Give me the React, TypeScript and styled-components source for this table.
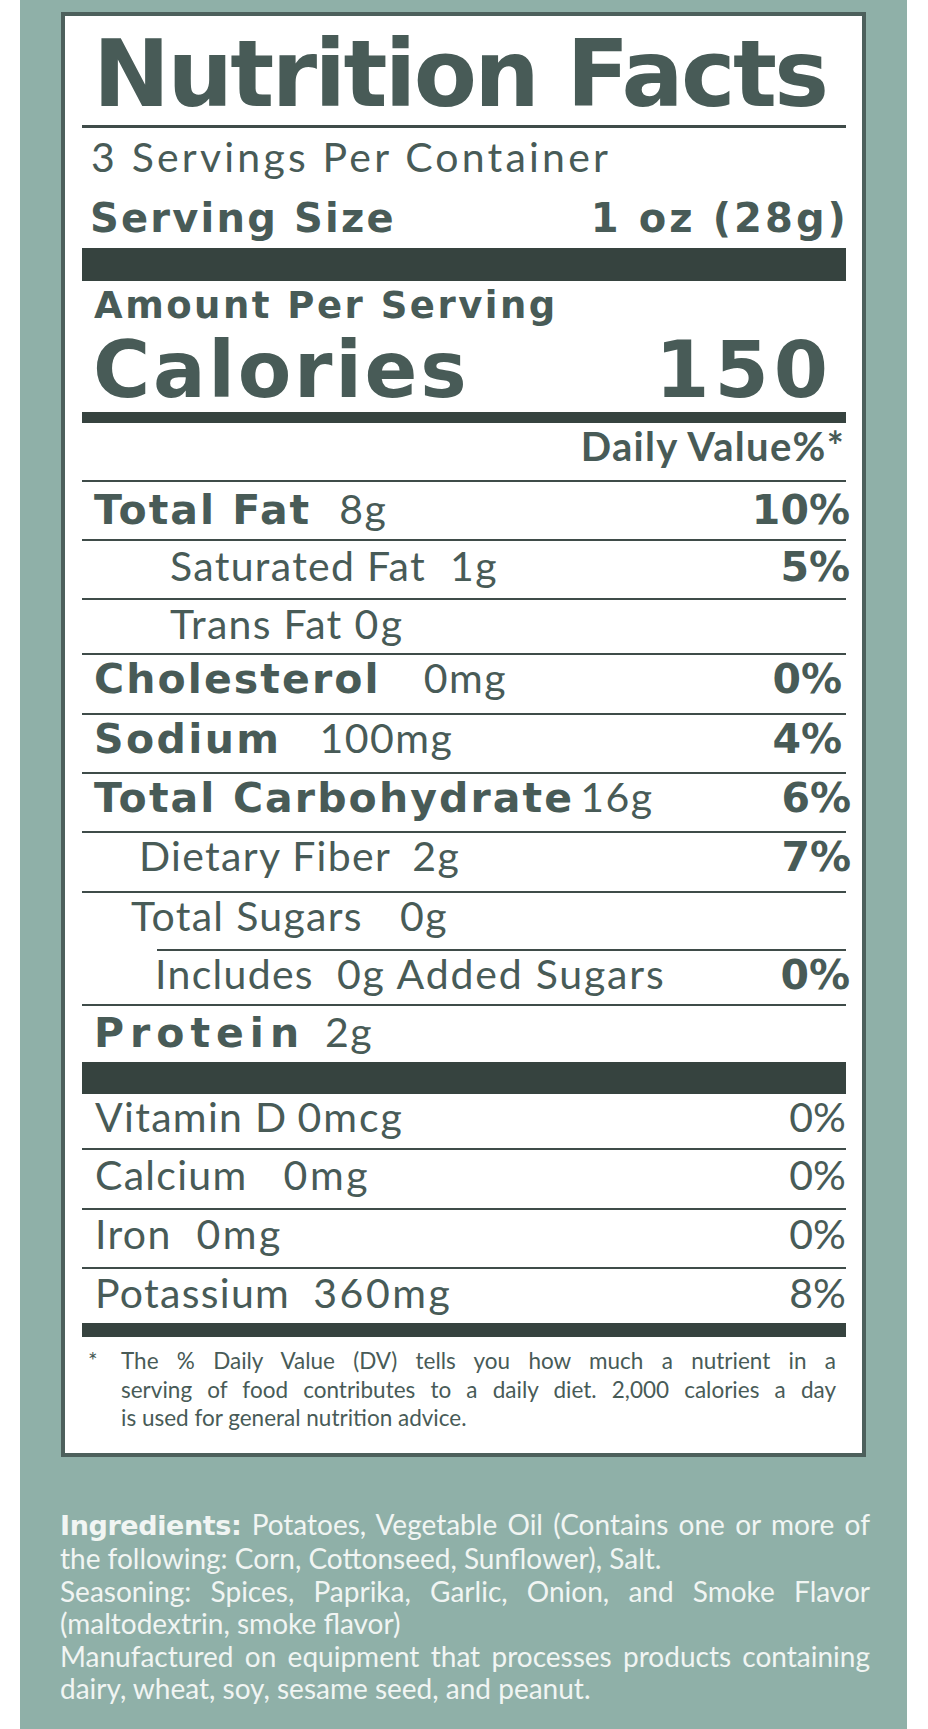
import React from "react";
import styled, { createGlobalStyle } from "styled-components";

const GlobalStyle = createGlobalStyle`
  html, body { margin: 0; padding: 0; background: #ffffff; }
  body { font-family: Lato, "Open Sans", sans-serif; }
  * { box-sizing: border-box; }
`;

const INK = "#485b57";
const BAR = "#36433f";
const RULE = "#3f4c49";
const HEAVY = `"DejaVu Sans", Verdana, sans-serif`;
const BOOK = `Lato, "Open Sans", sans-serif`;

const Page = styled.main`
  width: 887px;
  margin-left: 20px;
  background: #8fb0a8;
  padding: 12px 41px 26px;
`;

const Card = styled.section`
  background: #ffffff;
  border: 4px solid #4d605c;
  padding: 0 16px 20px 17px;
  color: ${INK};
  font-family: ${BOOK};
`;

const Title = styled.h1`
  margin: 0;
  font-family: ${HEAVY};
  font-size: 92px;
  line-height: 94px;
  font-weight: 700;
  letter-spacing: -2.6px;
  padding: 12px 0 3px 11px;
  border-bottom: 3px solid ${RULE};
  white-space: nowrap;
`;

const Servings = styled.div`
  font-size: 41px;
  line-height: 50px;
  font-weight: 400;
  letter-spacing: 3.2px;
  padding: 4px 0 0 9px;
`;

const SizeRow = styled.div`
  display: flex;
  justify-content: space-between;
  font-family: ${HEAVY};
  font-size: 40px;
  line-height: 50px;
  font-weight: 700;
  letter-spacing: 2.2px;
  margin-top: 11px;
  padding-left: 8px;
`;

const SizeValue = styled.span`
  letter-spacing: 3.1px;
  margin-right: -3px;
`;

const Bar = styled.div<{ $h: number; $mt?: number }>`
  height: ${(p) => p.$h}px;
  margin-top: ${(p) => p.$mt ?? 0}px;
  background: ${BAR};
`;

const Amount = styled.div`
  font-family: ${HEAVY};
  font-size: 37px;
  line-height: 40px;
  font-weight: 700;
  letter-spacing: 2.5px;
  margin-top: 5px;
  padding-left: 12px;
`;

const CaloriesRow = styled.div`
  display: flex;
  justify-content: space-between;
  font-family: ${HEAVY};
  font-size: 78px;
  line-height: 80px;
  font-weight: 700;
  padding: 4px 18px 0 11px;
`;

const CaloriesLabel = styled.span`
  letter-spacing: 2.7px;
`;

const CaloriesValue = styled.span`
  letter-spacing: 5px;
  margin-right: -5px;
`;

const DailyValue = styled.div`
  font-size: 40px;
  line-height: 47px;
  font-weight: 700;
  letter-spacing: 1.3px;
  text-align: right;
  padding: 0 1px 10px 0;
  border-bottom: 2px solid ${RULE};
`;

const Row = styled.div<{ $h: number; $pt?: number; $rule?: boolean }>`
  display: flex;
  align-items: baseline;
  height: ${(p) => p.$h}px;
  padding-top: ${(p) => p.$pt ?? 0}px;
  font-size: 41px;
  line-height: 46px;
  white-space: nowrap;
  border-bottom: ${(p) => (p.$rule === false ? "none" : `2px solid ${RULE}`)};
`;

const Rule = styled.div<{ $inset: number }>`
  height: 2px;
  margin-left: ${(p) => p.$inset}px;
  background: ${RULE};
`;

const Label = styled.span<{ $bold?: boolean; $indent: number; $ls?: number }>`
  font-family: ${(p) => (p.$bold ? HEAVY : BOOK)};
  font-weight: ${(p) => (p.$bold ? 700 : 400)};
  margin-left: ${(p) => p.$indent}px;
  letter-spacing: ${(p) => p.$ls ?? 1.3}px;
`;

const Amt = styled.span<{ $gap: number; $ls?: number }>`
  font-weight: 400;
  letter-spacing: ${(p) => p.$ls ?? 1.5}px;
  margin-left: ${(p) => p.$gap}px;
`;

const Pct = styled.span<{ $bold?: boolean; $mr?: number }>`
  margin-left: auto;
  font-family: ${(p) => (p.$bold ? HEAVY : BOOK)};
  font-weight: ${(p) => (p.$bold ? 700 : 400)};
  margin-right: ${(p) => p.$mr ?? 0}px;
`;

const Footnote = styled.div`
  display: flex;
  padding: 10px 10px 0 6px;
  font-size: 22.5px;
  line-height: 28.5px;
`;

const Star = styled.span`
  flex: 0 0 33px;
`;

const Lines = styled.div`
  flex: 1;
`;

const Line = styled.div<{ $full?: boolean }>`
  text-align: ${(p) => (p.$full ? "justify" : "left")};
  text-align-last: ${(p) => (p.$full ? "justify" : "left")};
  white-space: nowrap;
`;

const Ingredients = styled.div`
  margin: 51px -4px 0 -1px;
  color: #f1f5f3;
  font-family: ${BOOK};
  font-size: 28px;
  line-height: 32.5px;
`;

const Strong = styled.strong`
  font-family: ${HEAVY};
  font-weight: 700;
  font-size: 27px;
  letter-spacing: -0.4px;
`;

type Nutrient = {
  label: string;
  amount?: string;
  pct?: string;
  bold?: boolean;
  indent: number;
  gap: number;
  h: number;
  pt?: number;
  rule?: boolean;
  pctBold?: boolean;
  mr?: number;
  ls?: number;
  amtLs?: number;
};

const nutrients: Nutrient[] = [
  { label: "Total Fat", amount: "8g", pct: "10%", bold: true, ls: 2, indent: 12, gap: 28, h: 59, pt: 4, pctBold: true, mr: -4 },
  { label: "Saturated Fat", amount: "1g", pct: "5%", indent: 88, gap: 24, h: 59, pt: 2, pctBold: true, mr: -4 },
  { label: "Trans Fat", amount: "0g", amtLs: 2.5, indent: 88, gap: 12, h: 55, pt: 1 },
  { label: "Cholesterol", amount: "0mg", pct: "0%", bold: true, ls: 2.1, indent: 12, gap: 43, h: 60, pctBold: true, mr: 4 },
  { label: "Sodium", amount: "100mg", pct: "4%", bold: true, ls: 2.4, indent: 12, gap: 38, h: 59, pctBold: true, mr: 4 },
  { label: "Total Carbohydrate", amount: "16g", pct: "6%", bold: true, ls: 2.1, indent: 12, gap: 6, h: 59, pctBold: true, mr: -5 },
  { label: "Dietary Fiber", amount: "2g", pct: "7%", indent: 57, gap: 21, h: 60, pctBold: true, mr: -5 },
  { label: "Total Sugars", amount: "0g", indent: 49, gap: 37, h: 56, rule: false },
];

const nutrientsB: Nutrient[] = [
  { label: "Includes", amount: "0g Added Sugars", amtLs: 1.8, pct: "0%", indent: 73, gap: 23, h: 55, pctBold: true, mr: -4 },
  { label: "Protein", amount: "2g", bold: true, ls: 6, indent: 12, gap: 20, h: 56, pt: 3, rule: false },
];

const vitamins: Nutrient[] = [
  { label: "Vitamin D", amount: "0mcg", amtLs: 2, pct: "0%", indent: 13, gap: 10, h: 56 },
  { label: "Calcium", amount: "0mg", amtLs: 2.6, pct: "0%", indent: 13, gap: 36, h: 60, pt: 2 },
  { label: "Iron", amount: "0mg", amtLs: 2.4, pct: "0%", indent: 13, gap: 25, h: 59, pt: 1 },
  { label: "Potassium", amount: "360mg", amtLs: 2.6, pct: "8%", indent: 13, gap: 23, h: 54, pt: 1, rule: false },
];

function NutrientRow({ n }: { n: Nutrient }) {
  return (
    <Row $h={n.h} $pt={n.pt} $rule={n.rule}>
      <Label $bold={n.bold} $indent={n.indent} $ls={n.ls}>
        {n.label}
      </Label>
      {n.amount && (
        <Amt $gap={n.gap} $ls={n.amtLs}>
          {n.amount}
        </Amt>
      )}
      {n.pct && (
        <Pct $bold={n.pctBold} $mr={n.mr}>
          {n.pct}
        </Pct>
      )}
    </Row>
  );
}

export default function App() {
  return (
    <>
      <GlobalStyle />
      <Page>
        <Card>
          <Title>Nutrition Facts</Title>
          <Servings>3 Servings Per Container</Servings>
          <SizeRow>
            <span>Serving Size</span>
            <SizeValue>1 oz (28g)</SizeValue>
          </SizeRow>
          <Bar $h={33} $mt={5} />
          <Amount>Amount Per Serving</Amount>
          <CaloriesRow>
            <CaloriesLabel>Calories</CaloriesLabel>
            <CaloriesValue>150</CaloriesValue>
          </CaloriesRow>
          <Bar $h={11} $mt={2} />
          <DailyValue>Daily Value%*</DailyValue>
          {nutrients.map((n) => (
            <NutrientRow key={n.label} n={n} />
          ))}
          <Rule $inset={75} />
          {nutrientsB.map((n) => (
            <NutrientRow key={n.label} n={n} />
          ))}
          <Bar $h={32} />
          {vitamins.map((n) => (
            <NutrientRow key={n.label} n={n} />
          ))}
          <Bar $h={14} />
          <Footnote>
            <Star>*</Star>
            <Lines>
              <Line $full>The % Daily Value (DV) tells you how much a nutrient in a</Line>
              <Line $full>serving of food contributes to a daily diet. 2,000 calories a day</Line>
              <Line>is used for general nutrition advice.</Line>
            </Lines>
          </Footnote>
        </Card>
        <Ingredients>
          <Line $full>
            <Strong>Ingredients:</Strong> Potatoes, Vegetable Oil (Contains one or more of
          </Line>
          <Line>the following: Corn, Cottonseed, Sunflower), Salt.</Line>
          <Line $full>Seasoning: Spices, Paprika, Garlic, Onion, and Smoke Flavor</Line>
          <Line>(maltodextrin, smoke flavor)</Line>
          <Line $full>Manufactured on equipment that processes products containing</Line>
          <Line>dairy, wheat, soy, sesame seed, and peanut.</Line>
        </Ingredients>
      </Page>
    </>
  );
}
